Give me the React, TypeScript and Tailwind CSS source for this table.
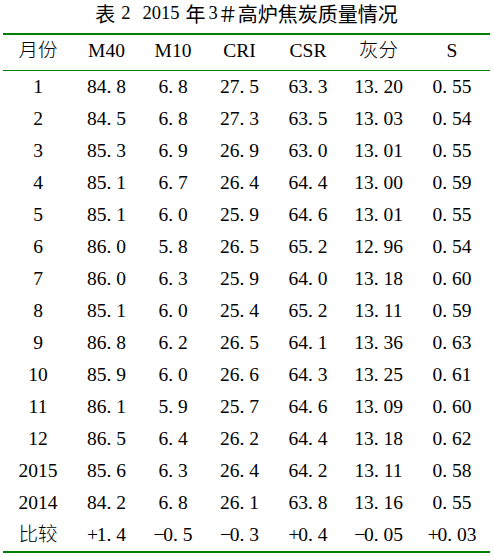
const headers = ["月份", "M40", "M10", "CRI", "CSR", "灰分", "S"];

const rows = [
  ["1", "84.8", "6.8", "27.5", "63.3", "13.20", "0.55"],
  ["2", "84.5", "6.8", "27.3", "63.5", "13.03", "0.54"],
  ["3", "85.3", "6.9", "26.9", "63.0", "13.01", "0.55"],
  ["4", "85.1", "6.7", "26.4", "64.4", "13.00", "0.59"],
  ["5", "85.1", "6.0", "25.9", "64.6", "13.01", "0.55"],
  ["6", "86.0", "5.8", "26.5", "65.2", "12.96", "0.54"],
  ["7", "86.0", "6.3", "25.9", "64.0", "13.18", "0.60"],
  ["8", "85.1", "6.0", "25.4", "65.2", "13.11", "0.59"],
  ["9", "86.8", "6.2", "26.5", "64.1", "13.36", "0.63"],
  ["10", "85.9", "6.0", "26.6", "64.3", "13.25", "0.61"],
  ["11", "86.1", "5.9", "25.7", "64.6", "13.09", "0.60"],
  ["12", "86.5", "6.4", "26.2", "64.4", "13.18", "0.62"],
  ["2015", "85.6", "6.3", "26.4", "64.2", "13.11", "0.58"],
  ["2014", "84.2", "6.8", "26.1", "63.8", "13.16", "0.55"],
  ["比较", "+1.4", "−0.5", "−0.3", "+0.4", "−0.05", "+0.03"],
];

// half-width cells for signs and the point, like the source font
function Num({ value }: { value: string }) {
  return (
    <>
      {value.split("").map((ch, i) =>
        ch === "." ? (
          <span key={i} className="inline-block w-[0.5em] text-left">.</span>
        ) : ch === "+" || ch === "−" ? (
          <span key={i} className="inline-block w-[0.5em] text-center">{ch}</span>
        ) : (
          <span key={i}>{ch}</span>
        )
      )}
    </>
  );
}

const cols = "grid grid-cols-[70px_67px_66px_67px_70px_71px_76px]";

export default function App() {
  return (
    <main className="w-[494px] h-[556px] bg-white text-black pl-[3px] pr-[4px] font-['Liberation_Serif','Noto_Sans_CJK_SC',serif]">
      <div className="h-[33px] flex items-center justify-center pb-[6px] text-[20px] leading-none font-['Noto_Sans_CJK_SC',sans-serif]">
        <span>表</span>
        <span className="font-['Liberation_Serif',serif] text-[18.5px] ml-[6px]">2</span>
        <span className="font-['Liberation_Serif',serif] text-[18.5px] ml-[12px]">2015</span>
        <span className="ml-[6px]">年</span>
        <span className="font-['Liberation_Serif',serif] text-[18.5px] ml-[3px]">3</span>
        <span>＃高炉焦炭质量情况</span>
      </div>

      <div className="border-t-2 border-b-2 border-[#008000] text-[19.5px] leading-none">
        <div className={`${cols} h-[36px] border-b border-[#008000] items-center pb-[3px]`}>
          {headers.map((h, i) => (
            <div key={h} className={`text-center ${i === 0 || i === 5 ? "font-light" : ""}`}>{h}</div>
          ))}
        </div>
        {rows.map((r) => (
          <div key={r[0]} className={`${cols} h-[32px] items-center`}>
            {r.map((v, i) => (
              <div key={i} className={`text-center ${v === "比较" ? "font-light" : ""}`}>
                {i === 0 ? v : <Num value={v} />}
              </div>
            ))}
          </div>
        ))}
      </div>
    </main>
  );
}
